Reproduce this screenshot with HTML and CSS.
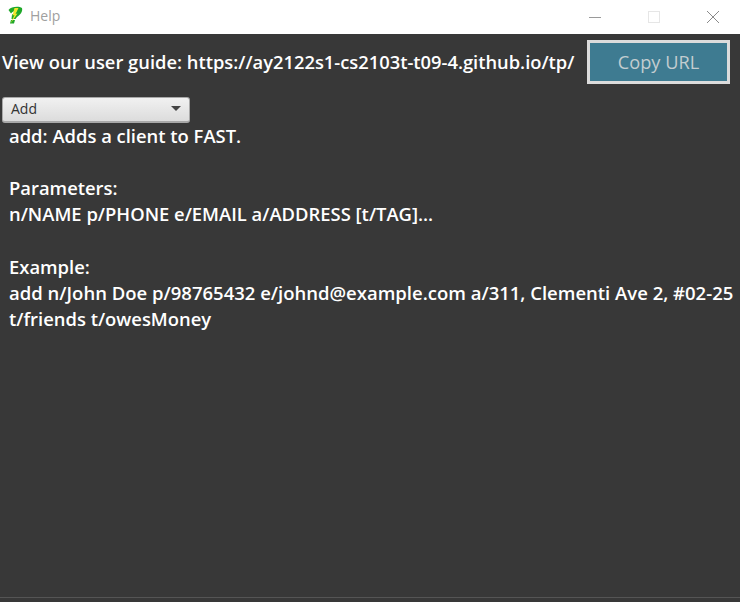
FILE: index.html
```html
<!DOCTYPE html>
<html lang="en">
<head>
    <meta charset="UTF-8">
    <title>Help</title>
    <link rel="stylesheet" href="styles.css">
</head>
<body>
    <div class="title-bar">
        <svg class="app-icon" width="16" height="18" viewBox="0 0 16 18">
            <path d="M1.500 4 C4 0.500 12 0 15 2 C16 6 13 9 10 11 L8.500 13 L4.500 13 L5 8.500 C7 7.500 9 6.500 9.500 5 C8 4.500 6 5.500 4 7.500 Z" fill="#1fa82a"/>
            <path d="M4 14 L8 14 L7 17.500 L3 17.500 Z" fill="#1fa82a"/>
            <path d="M7.500 2 L5.500 9.500 L7.500 9 L3.500 17.500 L10.500 7.500 L8.500 8 L11.500 2 Z" fill="#f0e62c"/>
        </svg>
        <span class="window-title">Help</span>
        <div class="window-buttons">
            <svg class="win-btn" width="14" height="14" viewBox="0 0 14 14"><path d="M1 7.500 H13" stroke="#9a9a9a" fill="none"/></svg>
            <svg class="win-btn" width="14" height="14" viewBox="0 0 14 14"><rect x="1.500" y="1.500" width="11" height="11" stroke="#e6e6e6" fill="none"/></svg>
            <svg class="win-btn" width="14" height="14" viewBox="0 0 14 14"><path d="M1 1 L13 13 M13 1 L1 13" stroke="#8a8a8a" fill="none"/></svg>
        </div>
    </div>
    <div class="content">
        <div class="url-row">
            <span class="url-label">View our user guide: https://ay2122s1-cs2103t-t09-4.github.io/tp/</span>
            <button class="copy-btn">Copy URL</button>
        </div>
        <div class="combo">
            <span>Add</span>
            <span class="combo-arrow"></span>
        </div>
        <div class="help-text">
            <div>add: Adds a client to FAST.</div>
            <div>&nbsp;</div>
            <div>Parameters:</div>
            <div>n/NAME p/PHONE e/EMAIL a/ADDRESS [t/TAG]...</div>
            <div>&nbsp;</div>
            <div>Example:</div>
            <div class="long-line">add n/John Doe p/98765432 e/johnd@example.com a/311, Clementi Ave 2, #02-25</div>
            <div>t/friends t/owesMoney</div>
        </div>
        <div class="bottom-line"></div>
    </div>
</body>
</html>
```

FILE: styles.css
```css
html, body {
    height: 100%;
}
body {
    margin: 0;
    display: flex;
    flex-direction: column;
    overflow: hidden;
    font-family: "Open Sans", sans-serif;
    background: #383838;
}
.title-bar {
    height: 34px;
    flex: none;
    display: flex;
    align-items: center;
    background: #fff;
    padding: 0 0 4px 7px;
    box-sizing: border-box;
}
.app-icon {
    margin-right: 7px;
}
.window-title {
    font-size: 14px;
    color: #a0a0a0;
}
.window-buttons {
    margin-left: auto;
    display: flex;
    gap: 45px;
    padding-right: 20px;
    padding-top: 4px;
}
.content {
    flex: 1;
    display: flex;
    flex-direction: column;
    min-height: 0;
}
.url-row {
    display: flex;
    align-items: center;
    justify-content: space-between;
    padding: 6px 10px 0 2px;
}
.url-label {
    font-size: 18.330px;
    font-weight: 600;
    color: #fff;
    padding-bottom: 2px;
}
.copy-btn {
    width: 143px;
    height: 44px;
    padding: 0;
    font-family: "Open Sans", sans-serif;
    font-size: 18.200px;
    color: #c3cdd0;
    background: #3e7b91;
    border: 3px solid #dcdcdc;
    border-radius: 0;
}
.combo {
    width: 188px;
    height: 26px;
    box-sizing: border-box;
    margin: 13px 0 0 2px;
    padding: 0 8px 2px;
    display: flex;
    align-items: center;
    justify-content: space-between;
    font-size: 14px;
    color: #333;
    background: linear-gradient(#f1f1f1, #dcdcdc);
    border: 1px solid #a8a8a8;
    border-bottom-width: 2px;
    border-radius: 3px;
}
.combo-arrow {
    width: 0;
    height: 0;
    border-left: 5px solid transparent;
    border-right: 5px solid transparent;
    border-top: 5px solid #444;
}
.help-text {
    flex: 1;
    margin-top: -0.500px;
    padding: 0 0 0 9px;
    font-size: 18.400px;
    font-weight: 600;
    line-height: 26.200px;
    color: #fff;
    white-space: nowrap;
}
.long-line {
    font-size: 18.500px;
}
.bottom-line {
    height: 1px;
    flex: none;
    margin-bottom: 4px;
    background: #555;
}
```
